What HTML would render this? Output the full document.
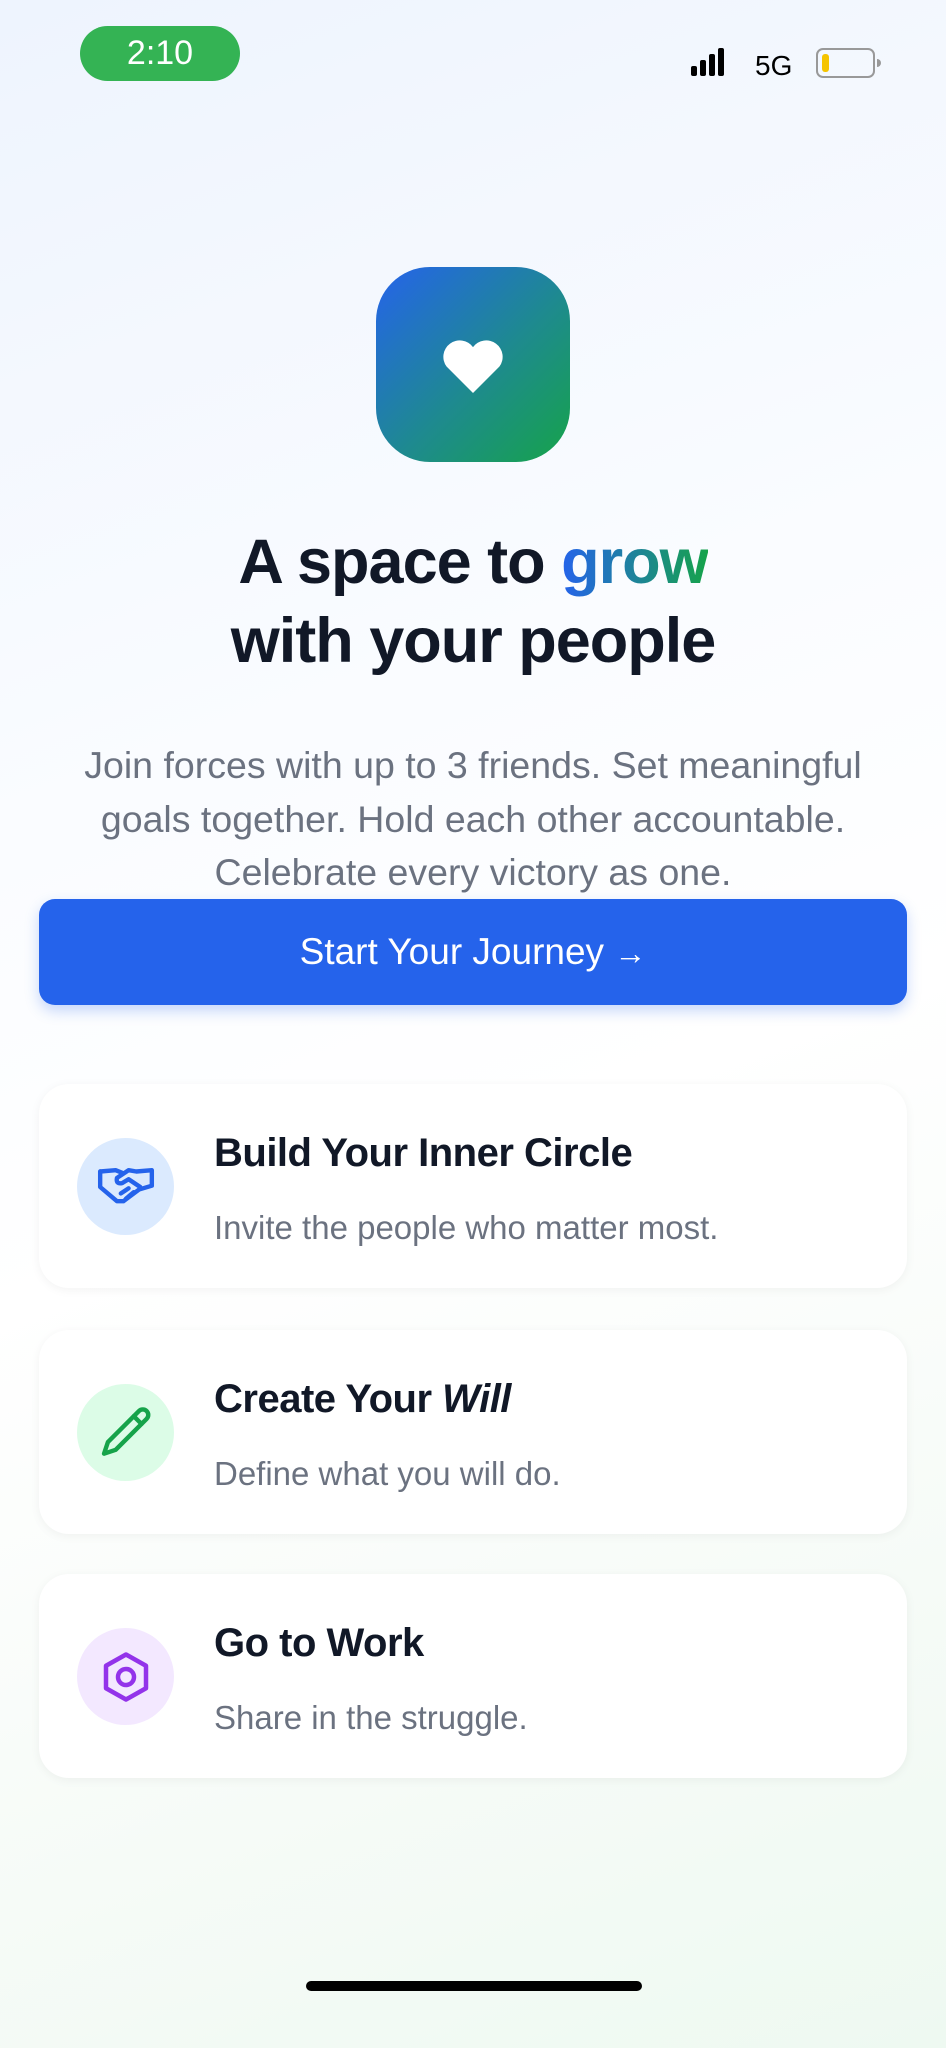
<!DOCTYPE html>
<html><head><meta charset="utf-8"><style>
*{margin:0;padding:0;box-sizing:border-box}
body{width:946px;height:2048px;overflow:hidden;font-family:"Liberation Sans",sans-serif;
background:linear-gradient(160deg,#eef4fe 0%,#fafcff 35%,#ffffff 55%,#f6fbf7 80%,#eef9f1 100%);position:relative}
.abs{position:absolute}
.pill{left:80px;top:26px;width:160px;height:55px;border-radius:28px;background:#34b354;color:#fff;font-size:34px;text-align:center;line-height:55px}
.icon{left:376px;top:267px;width:194px;height:195px;border-radius:54px;background:linear-gradient(135deg,#2563eb 0%,#1e8a8f 55%,#16a34a 100%)}
h1{position:absolute;left:0;width:946px;top:523px;text-align:center;font-size:63px;line-height:79px;font-weight:700;color:#111827;letter-spacing:-1px}
.g{background:linear-gradient(90deg,#2563eb,#16a34a);-webkit-background-clip:text;background-clip:text;color:transparent}
p.sub{position:absolute;left:0;width:946px;top:739px;text-align:center;font-size:37.5px;line-height:53.5px;color:#6b7280}
.btn{left:39px;top:899px;width:868px;height:106px;border-radius:16px;background:#2563eb;color:#fff;font-size:37px;text-align:center;line-height:106px;box-shadow:0 6px 14px rgba(37,99,235,.25)}
.card{left:39px;width:868px;height:204px;border-radius:30px;background:#fff;box-shadow:0 2px 10px rgba(0,0,0,.05)}
.circ{position:absolute;left:38px;top:54px;width:97px;height:97px;border-radius:50%;display:flex;align-items:center;justify-content:center}
.t{position:absolute;left:175px;top:47px;font-size:40px;font-weight:700;color:#111827;letter-spacing:-.5px}
.s{position:absolute;left:175px;top:125px;font-size:33px;color:#6b7280}
</style></head><body>
<div class="abs pill">2:10</div>
<div class="abs" style="left:691px;top:48px">
<svg width="190" height="32" viewBox="0 0 190 32">
<rect x="0" y="18" width="6" height="10" rx="2" fill="#000"/>
<rect x="9" y="12" width="6" height="16" rx="2" fill="#000"/>
<rect x="18" y="6" width="6" height="22" rx="2" fill="#000"/>
<rect x="27" y="0" width="6" height="28" rx="2" fill="#000"/>
<text x="64" y="27" font-family="Liberation Sans" font-size="28" fill="#000">5G</text>
<rect x="126" y="1" width="57" height="28" rx="6" fill="none" stroke="#999" stroke-width="2"/>
<rect x="131" y="6" width="7" height="18" rx="3" fill="#f5c400"/>
<path d="M186 11 a4 4 0 0 1 0 8z" fill="#999"/>
</svg></div>
<div class="abs icon"><svg class="abs" style="left:64px;top:72px" width="66" height="54" viewBox="0 0 24 20"><path d="M12 20 L2.2 10.2 A5.8 5.8 0 0 1 12 3 A5.8 5.8 0 0 1 21.8 10.2Z" fill="#fff"/></svg></div>
<h1>A space to <span class="g">grow</span><br>with your people</h1>
<p class="sub">Join forces with up to 3 friends. Set meaningful<br>goals together. Hold each other accountable.<br>Celebrate every victory as one.</p>
<div class="abs btn">Start Your Journey <span style="font-size:32px">→</span></div>

<div class="abs card" style="top:1084px"><div class="circ" style="background:#dbeafe">
<svg width="62" height="62" viewBox="0 0 24 24" fill="none" stroke="#2563eb" stroke-width="1.7" stroke-linejoin="round" stroke-linecap="round"><path d="M2 6 L2 12 L8.5 17.5 L11 17.5 L17 13 L22 11.5 L22 5.5 L16 6 L13 5.5 L8.5 8.5 Q8 11 10.5 10.5 L13 9 L17.5 12"/><path d="M2 6 L8 5.5 L10.5 6.5"/><path d="M10 14.5 L13 12.5 M12 16.5 L15 14"/></svg></div>
<div class="t">Build Your Inner Circle</div><div class="s">Invite the people who matter most.</div></div>

<div class="abs card" style="top:1330px"><div class="circ" style="background:#dcfce7">
<svg width="62" height="62" viewBox="0 0 24 24" fill="none" stroke="#16a34a" stroke-width="1.7" stroke-linejoin="round" stroke-linecap="round"><path d="M17 3.5 a2.1 2.1 0 0 1 3 3 L8 18.5 L3.5 20 L5 15.5 Z"/><path d="M15 5.5 L18 8.5"/></svg></div>
<div class="t">Create Your <i>Will</i></div><div class="s">Define what you will do.</div></div>

<div class="abs card" style="top:1574px"><div class="circ" style="background:#f3e8ff">
<svg width="60" height="60" viewBox="0 0 24 24" fill="none" stroke="#9333ea" stroke-width="1.8" stroke-linejoin="round"><path d="M12 3 L20 7.5 L20 16.5 L12 21 L4 16.5 L4 7.5 Z"/><circle cx="12" cy="12" r="3.2"/></svg></div>
<div class="t">Go to Work</div><div class="s">Share in the struggle.</div></div>

<div class="abs" style="left:306px;top:1981px;width:336px;height:10px;border-radius:5px;background:#000"></div>
</body></html>
